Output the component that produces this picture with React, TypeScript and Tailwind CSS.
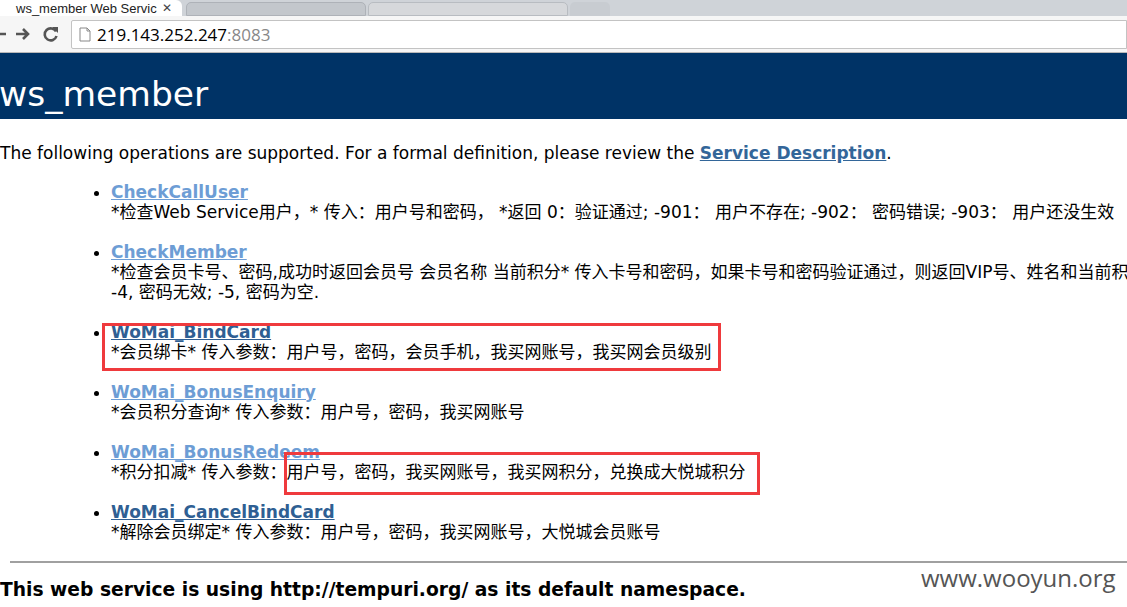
import React from 'react'

const ops = [
  {
    name: 'CheckCallUser',
    visited: true,
    lines: ['*检查Web Service用户，* 传入：用户号和密码， *返回 0：验证通过; -901： 用户不存在; -902： 密码错误; -903： 用户还没生效'],
  },
  {
    name: 'CheckMember',
    visited: true,
    lines: [
      '*检查会员卡号、密码,成功时返回会员号 会员名称 当前积分* 传入卡号和密码，如果卡号和密码验证通过，则返回VIP号、姓名和当前积',
      '-4, 密码无效; -5, 密码为空.',
    ],
  },
  {
    name: 'WoMai_BindCard',
    visited: false,
    lines: ['*会员绑卡* 传入参数：用户号，密码，会员手机，我买网账号，我买网会员级别'],
  },
  {
    name: 'WoMai_BonusEnquiry',
    visited: true,
    lines: ['*会员积分查询* 传入参数：用户号，密码，我买网账号'],
  },
  {
    name: 'WoMai_BonusRedeem',
    visited: true,
    lines: ['*积分扣减* 传入参数：用户号，密码，我买网账号，我买网积分，兑换成大悦城积分'],
  },
  {
    name: 'WoMai_CancelBindCard',
    visited: false,
    lines: ['*解除会员绑定* 传入参数：用户号，密码，我买网账号，大悦城会员账号'],
  },
]

const font = { fontFamily: '"DejaVu Sans", "Noto Sans CJK SC", sans-serif' }

function BrowserChrome() {
  return (
    <div className="w-full">
      {/* tab strip */}
      <div className="h-[16px] flex items-end bg-[#cfd3d8] overflow-hidden">
        <div className="h-[16px] w-[182px] bg-white flex items-center pl-[16px] pr-[10px] rounded-tr-[6px]">
          <span className="text-[13px] text-[#222] leading-none whitespace-nowrap" style={{ fontFamily: '"Liberation Sans", sans-serif' }}>
            ws_member Web Servic
          </span>
          <span className="ml-auto text-[12px] text-[#444] leading-none">✕</span>
        </div>
        <div className="h-[14px] w-[180px] ml-[4px] bg-[#c3c7cc] rounded-t-[5px] border border-[#aeb2b8]" />
        <div className="h-[14px] w-[200px] ml-[2px] bg-[#d6d8db] rounded-t-[5px] border border-[#b8bcc1]" />
        <div className="h-[14px] w-[40px] ml-[2px] bg-[#c8ccd1] rounded-t-[5px]" />
      </div>
      {/* toolbar */}
      <div className="h-[37px] bg-[#f6f6f6] border-b border-[#b9b9b9] flex items-center">
        <svg width="6" height="16" viewBox="0 0 6 16">
          <path d="M0 8h6" stroke="#555" strokeWidth="2.5" />
        </svg>
        <svg width="16" height="16" viewBox="0 0 16 16" className="ml-[9px]">
          <path d="M1 8h12M8 3l5 5-5 5" stroke="#555" strokeWidth="2.6" fill="none" />
        </svg>
        <svg width="18" height="18" viewBox="0 0 18 18" className="ml-[11px]">
          <path d="M14 6.5A6 6 0 1 0 14.5 11" stroke="#555" strokeWidth="2.6" fill="none" />
          <path d="M10 2h6v6z" fill="#555" />
        </svg>
        <div className="ml-[11px] flex-1 h-[29px] bg-white border border-[#c3c3c3] rounded-l-[2px] flex items-center">
          <svg width="12" height="15" viewBox="0 0 12 15" className="ml-[7px]">
            <path d="M1 1h7l3 3v10H1z" fill="#fff" stroke="#888" />
            <path d="M8 1v3h3" fill="none" stroke="#888" />
          </svg>
          <span className="ml-[6px] text-[17px] text-black leading-none" style={{ fontFamily: '"Open Sans", "DejaVu Sans", sans-serif' }}>
            219.143.252.247<span className="text-[#888]">:8083</span>
          </span>
        </div>
      </div>
    </div>
  )
}

export default function App() {
  return (
    <div className="w-[1127px] h-[607px] overflow-hidden bg-white relative" style={font}>
      <BrowserChrome />
      <div className="h-[66px] bg-[#003366] flex items-center">
        <h1 className="text-white text-[34.5px] leading-none font-normal mt-[16px] -ml-[1px]">ws_member</h1>
      </div>

      <p className="mt-[22px] text-[17px] text-black whitespace-nowrap">
        The following operations are supported. For a formal definition, please review the{' '}
        <a className="font-bold text-[#336699] underline">Service Description</a>.
      </p>

      <ul className="mt-[15px] ml-[95px] list-disc">
        {ops.map((op) => (
          <li key={op.name} className="ml-[16px] mb-[20px] text-[17px] leading-[20px]">
            <a
              className={`font-bold underline ${op.visited ? 'text-[#6d9dd5]' : 'text-[#2f5f93]'}`}
            >
              {op.name}
            </a>
            {op.lines.map((line) => (
              <div key={line} className="leading-[20px] text-black whitespace-nowrap">
                {line}
              </div>
            ))}
          </li>
        ))}
      </ul>

      <div className="absolute left-[10px] right-0 top-[561px] h-[2px] bg-[#a0a0a0]" />
      <p className="absolute left-0 top-[579px] text-[18.7px] leading-[22px] font-bold text-black whitespace-nowrap">
        This web service is using http://tempuri.org/ as its default namespace.
      </p>

      {/* annotations */}
      <div className="absolute left-[102px] top-[323px] w-[619px] h-[48px] border-[3px] border-[#ef3a3d]" />
      <div className="absolute left-[284px] top-[452px] w-[476px] h-[43px] border-[3px] border-[#ef3a3d]" />
      <div className="absolute left-[921px] top-[563px] text-[24px] leading-[30px] text-[#555] whitespace-nowrap" style={{ fontFamily: '"Open Sans", sans-serif' }}>
        www.wooyun.org
      </div>
    </div>
  )
}
